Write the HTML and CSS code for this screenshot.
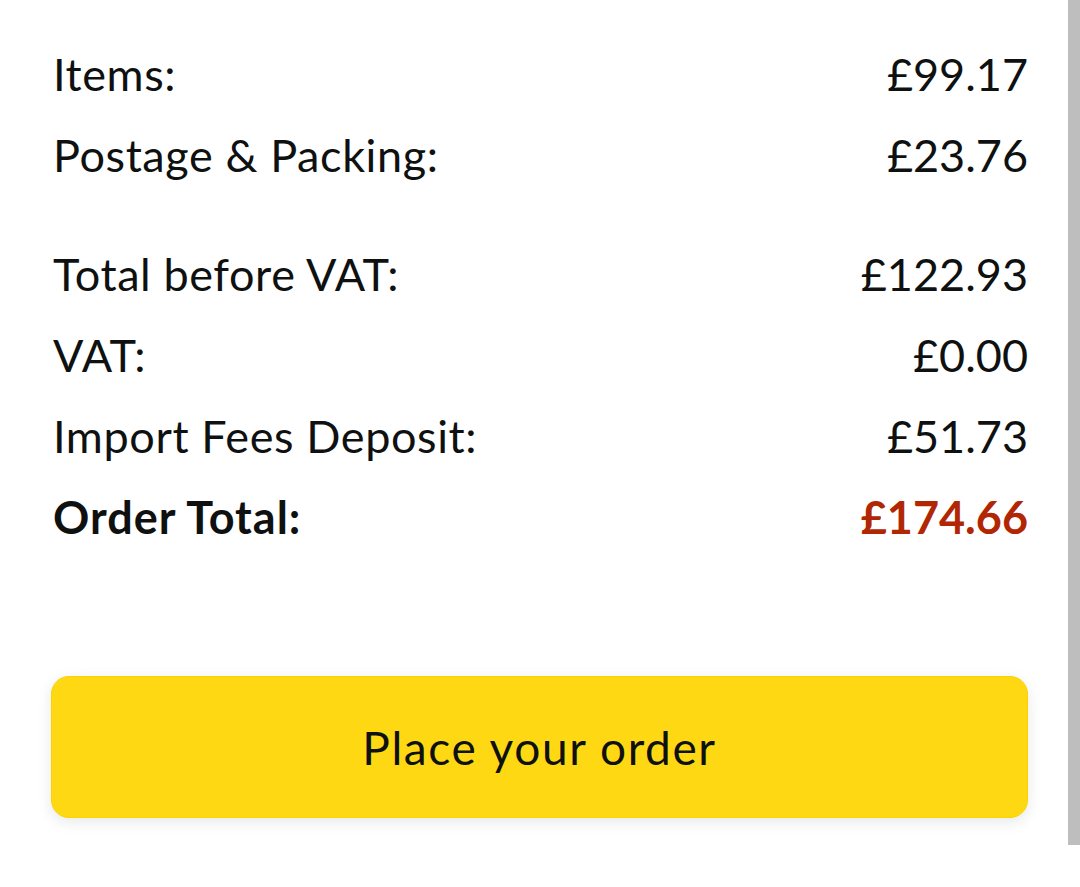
FILE: index.html
```html
<!DOCTYPE html>
<html lang="en">
<head>
<meta charset="utf-8">
<link rel="stylesheet" href="styles.css">
<title>Order summary</title>
</head>
<body>
<div class="page">
  <main class="summary">
    <div class="group">
      <div class="row"><span class="label">Items:</span><span class="amount">£99.17</span></div>
      <div class="row"><span class="label">Postage &amp; Packing:</span><span class="amount">£23.76</span></div>
    </div>
    <div class="group">
      <div class="row"><span class="label">Total before VAT:</span><span class="amount">£122.93</span></div>
      <div class="row"><span class="label">VAT:</span><span class="amount">£0.00</span></div>
      <div class="row"><span class="label">Import Fees Deposit:</span><span class="amount">£51.73</span></div>
      <div class="row total"><span class="label">Order Total:</span><span class="amount price">£174.66</span></div>
    </div>
    <button class="place" type="button">Place your order</button>
  </main>
  <div class="scrollbar"></div>
</div>
</body>
</html>
```

FILE: styles.css
```css
html, body {
  margin: 0;
  padding: 0;
  background: #ffffff;
}
body {
  font-family: Lato, "Noto Sans", sans-serif;
  color: #0f1111;
  width: 1080px;
  height: 887px;
  overflow: hidden;
}
.page {
  display: flex;
  align-items: flex-start;
}
.summary {
  flex: 1;
  padding: 34px 40px 0 53px;
  display: flex;
  flex-direction: column;
}
.group + .group {
  margin-top: 38px;
}
.row {
  display: flex;
  justify-content: space-between;
  font-size: 45px;
  line-height: 81px;
}
.label {
  letter-spacing: 0.6px;
}
.amount {
  letter-spacing: 0;
}
.total {
  font-weight: 700;
}
.total .label {
  letter-spacing: 1px;
}
.price {
  color: #b12704;
}
.place {
  margin-top: 118px;
  margin-left: -2px;
  height: 142px;
  border: 1px solid #fcd200;
  border-radius: 18px;
  background: #ffd814;
  box-shadow: 0 4px 14px rgba(213, 217, 217, 0.6);
  font-family: inherit;
  font-size: 46px;
  letter-spacing: 1.6px;
  color: #0f1111;
  padding: 0;
}
.scrollbar {
  width: 12px;
  height: 845px;
  background: #bebebe;
}
```
